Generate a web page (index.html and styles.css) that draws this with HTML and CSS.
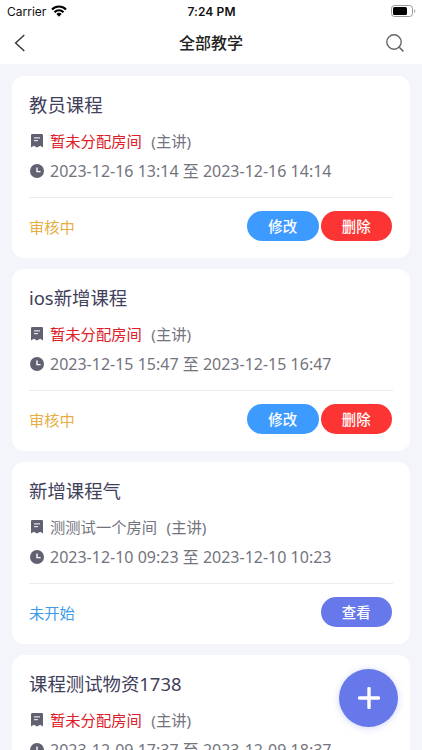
FILE: index.html
```html
<!DOCTYPE html>
<html lang="zh-CN">
<head>
  <meta charset="UTF-8">
  <meta name="viewport" content="width=device-width, initial-scale=1.0">
  <title>全部教学</title>
  <link rel="stylesheet" href="styles.css">
</head>
<body>
  <svg class="sprite">
    <symbol id="icon-room" viewBox="0 0 12 14">
      <path d="M1.2 0h9.6Q12 0 12 1.2V13.6L9.2 11.8 6 13.6 2.8 11.8 0 13.6V1.2Q0 0 1.2 0Z" fill="#606171"/>
      <path d="M3 3.9h6M3 6.7h4" stroke="#fff" stroke-width="1"/>
    </symbol>
    <symbol id="icon-clock" viewBox="0 0 14 14">
      <circle cx="7" cy="7" r="7" fill="#606171"/>
      <path d="M7 3.4V7.6H10.6" fill="none" stroke="#fff" stroke-width="1.4"/>
    </symbol>
  </svg>

  <div class="status-bar">
    <div class="carrier">
      <span>Carrier</span>
      <svg class="wifi" viewBox="0 0 16 12">
        <path d="M1 4.5A9.8 9.8 0 0 1 15 4.5M3.5 7.2A6.3 6.3 0 0 1 12.5 7.2" fill="none" stroke="#000" stroke-width="2.1"/>
        <path d="M5.4 9A3.8 3.8 0 0 1 10.6 9L8 11.7Z"/>
      </svg>
    </div>
    <div class="time">7:24 PM</div>
    <svg class="battery" viewBox="0 0 25 12">
      <rect x=".5" y=".5" width="21" height="11" rx="3" fill="none" stroke="#999"/>
      <rect x="2" y="2" width="14" height="8" rx="1.5"/>
      <path d="M23.3 4v4q1-.6 1-2t-1-2Z" fill="#999"/>
    </svg>
  </div>

  <div class="nav-bar">
    <svg class="back" viewBox="0 0 12 18"><path d="M10.3 1 1.6 9l8.7 8" fill="none" stroke="#333" stroke-width="1.4"/></svg>
    <h1>全部教学</h1>
    <svg class="search" viewBox="0 0 18 18"><circle cx="8" cy="8" r="7.2" fill="none" stroke="#666" stroke-width="1.4"/><path d="M13 13l4.4 4.4" stroke="#666" stroke-width="1.5"/></svg>
  </div>

  <div class="list">
    <div class="card">
      <h2>教员课程</h2>
      <div class="row"><svg class="icon"><use href="#icon-room"/></svg><span class="unassigned">暂未分配房间</span><span class="role">(主讲)</span></div>
      <div class="row date"><svg class="icon"><use href="#icon-clock"/></svg><span>2023-12-16 13:14 至 2023-12-16 14:14</span></div>
      <div class="card-footer">
        <span class="status pending">审核中</span>
        <button class="btn btn-edit">修改</button>
        <button class="btn btn-delete">删除</button>
      </div>
    </div>

    <div class="card">
      <h2>ios新增课程</h2>
      <div class="row"><svg class="icon"><use href="#icon-room"/></svg><span class="unassigned">暂未分配房间</span><span class="role">(主讲)</span></div>
      <div class="row date"><svg class="icon"><use href="#icon-clock"/></svg><span>2023-12-15 15:47 至 2023-12-15 16:47</span></div>
      <div class="card-footer">
        <span class="status pending">审核中</span>
        <button class="btn btn-edit">修改</button>
        <button class="btn btn-delete">删除</button>
      </div>
    </div>

    <div class="card">
      <h2>新增课程气</h2>
      <div class="row"><svg class="icon"><use href="#icon-room"/></svg><span>测测试一个房间</span><span class="role">(主讲)</span></div>
      <div class="row date"><svg class="icon"><use href="#icon-clock"/></svg><span>2023-12-10 09:23 至 2023-12-10 10:23</span></div>
      <div class="card-footer">
        <span class="status waiting">未开始</span>
        <button class="btn btn-view">查看</button>
      </div>
    </div>

    <div class="card">
      <h2>课程测试物资1738</h2>
      <div class="row"><svg class="icon"><use href="#icon-room"/></svg><span class="unassigned">暂未分配房间</span><span class="role">(主讲)</span></div>
      <div class="row date"><svg class="icon"><use href="#icon-clock"/></svg><span>2023-12-09 17:37 至 2023-12-09 18:37</span></div>
    </div>
  </div>

  <button class="add-btn" aria-label="添加">
    <svg viewBox="0 0 22 22"><path d="M11 1.5v19M1.5 11h19" stroke="#fff" stroke-width="3.4" stroke-linecap="round"/></svg>
  </button>
</body>
</html>
```

FILE: styles.css
```css
* {
  box-sizing: border-box;
}

body {
  font-family: "Noto Sans", "Noto Sans CJK SC", sans-serif;
  margin: 0;
  height: 750px;
  overflow: hidden;
  background-color: #f4f5fa;
  color: #73747e;
}

.sprite {
  display: none;
}

.status-bar {
  display: grid;
  grid-template-columns: 1fr auto 1fr;
  align-items: center;
  height: 22px;
  padding: 0 6px 0 7px;
  background-color: #fff;
  color: #111;
  font-family: Inter, sans-serif;
  font-size: 12px;
}

.carrier {
  display: flex;
  align-items: center;
  gap: 5px;
}

.wifi {
  width: 16px;
  height: 12px;
}

.time {
  font-weight: 600;
  letter-spacing: 0.1px;
}

.battery {
  width: 25px;
  height: 12px;
  justify-self: end;
}

.nav-bar {
  display: grid;
  grid-template-columns: 1fr auto 1fr;
  align-items: center;
  height: 42px;
  padding: 0 18px 0 14px;
  background-color: #fff;
}

.nav-bar h1 {
  margin: 0 0 0 4px;
  font-size: 16px;
  line-height: 24px;
  font-weight: 500;
  color: #222;
}

.back {
  width: 12px;
  height: 18px;
}

.search {
  width: 18px;
  height: 18px;
  justify-self: end;
}

.list {
  display: flex;
  flex-direction: column;
  gap: 11px;
  padding: 12px 12px 0;
}

.card {
  flex: none;
  height: 182px;
  padding: 16px 17px 0;
  background-color: #fff;
  border-radius: 12px;
}

.card h2 {
  margin: 0 0 11px;
  font-size: 18.4px;
  line-height: 26px;
  font-weight: 400;
  color: #3f405b;
}

.row {
  display: flex;
  align-items: center;
  height: 24px;
  font-size: 15.3px;
  line-height: 24px;
  white-space: nowrap;
}

.row.date {
  margin-top: 5.5px;
  font-size: 16px;
}

.icon {
  flex: none;
  width: 16px;
  height: 14px;
  margin-right: 5px;
}

.unassigned {
  color: #dd2027;
}

.role {
  margin-left: 9.5px;
}

.card-footer {
  display: flex;
  align-items: center;
  gap: 2px;
  height: 58px;
  margin-top: 14px;
  padding-right: 1px;
  border-top: 1px solid #ebebef;
}

.status {
  margin-right: auto;
  font-size: 15.3px;
}

.pending {
  color: #e6ae43;
}

.waiting {
  color: #3d9be9;
}

.btn {
  width: 71.5px;
  height: 30px;
  padding: 1px 0 0;
  border: none;
  border-radius: 15px;
  font-family: inherit;
  font-size: 14.4px;
  line-height: 29px;
  font-weight: 500;
  color: #fff;
}

.btn-edit {
  background-color: #3d9aff;
}

.btn-delete {
  background-color: #fc3434;
}

.btn-view {
  background-color: #6678ea;
}

.add-btn {
  position: fixed;
  right: 24px;
  bottom: 23px;
  display: flex;
  align-items: center;
  justify-content: center;
  width: 59px;
  height: 58px;
  padding: 0;
  border: none;
  border-radius: 50%;
  background-color: #6678ea;
  box-shadow: 0 1px 7px rgba(102, 120, 234, 0.3);
}

.add-btn svg {
  width: 22px;
  height: 22px;
}
```
